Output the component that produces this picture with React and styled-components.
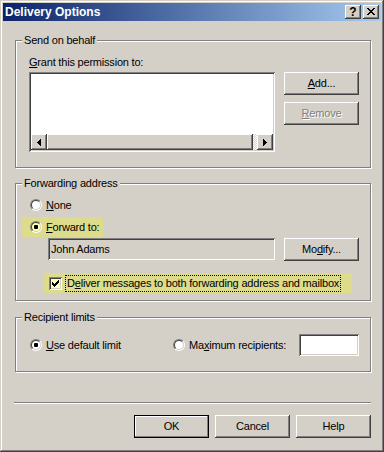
import React from 'react';
import styled, { createGlobalStyle, css } from 'styled-components';

const FACE = '#d4d0c8';
const HILITE = '#dcdc8c';
const HILITE_FILL = '#ffffb0';

const Global = createGlobalStyle`
  html, body { margin: 0; padding: 0; background: ${FACE}; }
  body {
    font-family: "Liberation Sans", Arial, sans-serif;
    font-size: 11px;
    line-height: 13px;
    letter-spacing: -0.2px;
    color: #000;
  }
  * { box-sizing: border-box; }
`;

const raised = css`
  box-shadow: inset -1px -1px #404040, inset 1px 1px #ffffff, inset -2px -2px #808080, inset 2px 2px ${FACE};
`;

const sunken = css`
  box-shadow: inset 1px 1px #808080, inset -1px -1px #ffffff, inset 2px 2px #404040, inset -2px -2px ${FACE};
`;

const Window = styled.div`
  width: 384px;
  height: 452px;
  padding: 3px;
  background: ${FACE};
  box-shadow: inset -1px -1px #404040, inset 1px 1px ${FACE}, inset -2px -2px #808080, inset 2px 2px #ffffff;
  display: flex;
  flex-direction: column;
`;

const TitleBar = styled.div`
  height: 18px;
  display: flex;
  align-items: center;
  padding: 0 2px;
  background: linear-gradient(to right, #0a246a, #a6caf0);
  color: #fff;
  font-weight: bold;
  font-size: 12px;
  letter-spacing: 0;
`;

const TitleText = styled.span`
  flex: 1;
`;

const CaptionButton = styled.div`
  width: 16px;
  height: 14px;
  margin-left: ${p => p.$ml || 0}px;
  background: ${FACE};
  ${raised};
  display: flex;
  align-items: center;
  justify-content: center;
  color: #000;
  font-weight: bold;
  font-size: 12px;
  line-height: 14px;
  padding-bottom: 1px;
`;

const Body = styled.div`
  flex: 1;
  display: flex;
  flex-direction: column;
  padding: 0 10px 0 12px;
`;

const Group = styled.div`
  margin-top: ${p => p.$mt}px;
  padding-bottom: ${p => p.$pb}px;
  border: 1px solid #808080;
  box-shadow: inset 1px 1px #ffffff, 1px 1px #ffffff;
  display: flex;
  flex-direction: column;
`;

const Legend = styled.div`
  align-self: flex-start;
  margin: -7px 0 0 6px;
  padding: 0 2px;
  background: ${FACE};
  line-height: 13px;
`;

const Section = styled.div`
  display: flex;
  flex-direction: column;
  align-items: flex-start;
  padding: ${p => p.$pt || 0}px 0 0 ${p => p.$pl || 0}px;
`;

const Label = styled.div`
  line-height: 13px;
`;

const Key = styled.span`
  text-decoration: underline;
`;

const SplitRow = styled.div`
  display: flex;
  align-items: flex-start;
  gap: 9px;
  margin-top: ${p => p.$mt || 0}px;
  margin-left: ${p => p.$ml || 0}px;
`;

const ListBox = styled.div`
  width: 246px;
  height: 80px;
  padding: 2px;
  background: #fff;
  ${sunken};
  display: flex;
  flex-direction: column;
`;

const ListArea = styled.div`
  flex: 1;
`;

const HScroll = styled.div`
  height: 16px;
  display: flex;
`;

const ScrollArrow = styled.div`
  width: 16px;
  height: 16px;
  background: ${FACE};
  ${raised};
  display: flex;
  align-items: center;
  justify-content: center;
`;

const Thumb = styled.div`
  width: 206px;
  height: 16px;
  background: ${FACE};
  ${raised};
`;

const Track = styled.div`
  flex: 1;
  background: repeating-conic-gradient(#ffffff 0 25%, ${FACE} 0 50%) 0 0 / 2px 2px;
`;

const ButtonStack = styled.div`
  display: flex;
  flex-direction: column;
  gap: 7px;
`;

const Button = styled.div`
  width: 75px;
  height: 23px;
  display: flex;
  align-items: center;
  justify-content: center;
  background: ${FACE};
  ${p => p.$default
    ? css`box-shadow: inset 0 0 0 1px #000, inset -2px -2px #808080, inset 2px 2px #ffffff;`
    : raised};
  color: ${p => (p.$disabled ? '#808080' : '#000')};
  text-shadow: ${p => (p.$disabled ? '1px 1px #ffffff' : 'none')};
`;

const Choice = styled.div`
  display: flex;
  align-items: center;
  height: 20px;
  gap: ${p => p.$gap ?? 4}px;
  margin-top: ${p => p.$mt || 0}px;
  margin-left: ${p => p.$ml || 0}px;
  padding: 0 ${p => p.$pr || 0}px 0 ${p => p.$pl ?? 8}px;
  background: ${p => (p.$hl ? HILITE : 'transparent')};
`;

const RadioOuter = styled.div`
  width: 12px;
  height: 12px;
  flex: none;
  border-radius: 50%;
  border: 1px solid;
  border-color: #808080 #ffffff #ffffff #808080;
  display: flex;
`;

const RadioInner = styled.div`
  flex: 1;
  border-radius: 50%;
  border: 1px solid;
  border-color: #404040 ${FACE} ${FACE} #404040;
  background: ${p => p.$fill};
  display: flex;
  align-items: center;
  justify-content: center;
`;

const RadioDot = styled.div`
  width: 4px;
  height: 4px;
  border-radius: 1px;
  background: #000;
`;

const CheckBox = styled.div`
  width: 13px;
  height: 13px;
  flex: none;
  background: ${p => p.$fill};
  ${sunken};
  display: flex;
  align-items: center;
  justify-content: center;
`;

const FocusLabel = styled.div`
  border: 1px dotted #000;
  padding: 1px 1px 1px 1px;
  line-height: 13px;
`;

const TextBox = styled.div`
  width: ${p => p.$w}px;
  height: 22px;
  padding: 0 3px;
  display: flex;
  align-items: center;
  background: ${p => p.$bg};
  ${sunken};
`;

const LimitsRow = styled.div`
  align-self: stretch;
  display: grid;
  grid-template-columns: 143px 1fr 60px;
  align-items: center;
  margin-top: 10px;
  padding-right: 11px;
`;

const Separator = styled.div`
  height: 2px;
  margin: 30px 0 0 -1px;
  border-top: 1px solid #808080;
  border-bottom: 1px solid #ffffff;
`;

const ButtonRow = styled.div`
  display: flex;
  justify-content: flex-end;
  gap: 6px;
  margin-top: 11px;
`;

const PixSvg = styled.svg`
  display: block;
`;

const Pixels = ({ rows, color = '#000' }) => {
  const h = rows.length;
  const w = rows[0].length;
  const rects = [];
  rows.forEach((r, y) =>
    [...r].forEach((c, x) => {
      if (c === '#') rects.push(<rect key={`${x}-${y}`} x={x} y={y} width={1} height={1} />);
    })
  );
  return (
    <PixSvg width={w} height={h} viewBox={`0 0 ${w} ${h}`} shapeRendering="crispEdges" fill={color}>
      {rects}
    </PixSvg>
  );
};

const CLOSE = [
  '##....##',
  '.##..##.',
  '..####..',
  '...##...',
  '..####..',
  '.##..##.',
  '##....##',
];

const LEFT = ['...#', '..##', '.###', '####', '.###', '..##', '...#'];
const RIGHT = ['#...', '##..', '###.', '####', '###.', '##..', '#...'];

const CHECK = [
  '......#',
  '.....##',
  '#...###',
  '##.###.',
  '#####..',
  '.###...',
  '..#....',
];

const Radio = ({ checked, fill = '#ffffff' }) => (
  <RadioOuter>
    <RadioInner $fill={fill}>{checked && <RadioDot />}</RadioInner>
  </RadioOuter>
);

export default function App() {
  return (
    <>
      <Global />
      <Window>
        <TitleBar>
          <TitleText>Delivery Options</TitleText>
          <CaptionButton>?</CaptionButton>
          <CaptionButton $ml={2}>
            <Pixels rows={CLOSE} />
          </CaptionButton>
        </TitleBar>
        <Body>
          <Group $mt={19} $pb={15}>
            <Legend>Send on behalf</Legend>
            <Section $pl={13} $pt={9}>
              <Label>
                <Key>G</Key>rant this permission to:
              </Label>
              <SplitRow $mt={3}>
                <ListBox>
                  <ListArea />
                  <HScroll>
                    <ScrollArrow>
                      <Pixels rows={LEFT} />
                    </ScrollArrow>
                    <Thumb />
                    <Track />
                    <ScrollArrow>
                      <Pixels rows={RIGHT} />
                    </ScrollArrow>
                  </HScroll>
                </ListBox>
                <ButtonStack>
                  <Button>
                    <Key>A</Key>dd...
                  </Button>
                  <Button $disabled>
                    <Key>R</Key>emove
                  </Button>
                </ButtonStack>
              </SplitRow>
            </Section>
          </Group>

          <Group $mt={15} $pb={7}>
            <Legend>Forwarding address</Legend>
            <Section $pl={6}>
              <Choice $mt={5}>
                <Radio />
                <span>
                  <Key>N</Key>one
                </span>
              </Choice>
              <Choice $mt={2} $hl $pr={4}>
                <Radio checked fill={HILITE_FILL} />
                <span>
                  <Key>F</Key>orward to:
                </span>
              </Choice>
              <SplitRow $mt={1} $ml={26}>
                <TextBox $w={227} $bg={FACE}>John Adams</TextBox>
                <Button>
                  Mo<Key>d</Key>ify...
                </Button>
              </SplitRow>
              <Choice $mt={12} $ml={22} $hl $pl={5} $pr={11} $gap={3}>
                <CheckBox $fill={HILITE_FILL}>
                  <Pixels rows={CHECK} />
                </CheckBox>
                <FocusLabel>
                  D<Key>e</Key>liver messages to both forwarding address and mailbox
                </FocusLabel>
              </Choice>
            </Section>
          </Group>

          <Group $mt={16} $pb={15}>
            <Legend>Recipient limits</Legend>
            <Section $pl={6}>
              <LimitsRow>
                <Choice>
                  <Radio checked />
                  <span>
                    <Key>U</Key>se default limit
                  </span>
                </Choice>
                <Choice>
                  <Radio />
                  <span>
                    Ma<Key>x</Key>imum recipients:
                  </span>
                </Choice>
                <TextBox $w={60} $bg="#ffffff" />
              </LimitsRow>
            </Section>
          </Group>

          <Separator />

          <ButtonRow>
            <Button $default>OK</Button>
            <Button>Cancel</Button>
            <Button>Help</Button>
          </ButtonRow>
        </Body>
      </Window>
    </>
  );
}
